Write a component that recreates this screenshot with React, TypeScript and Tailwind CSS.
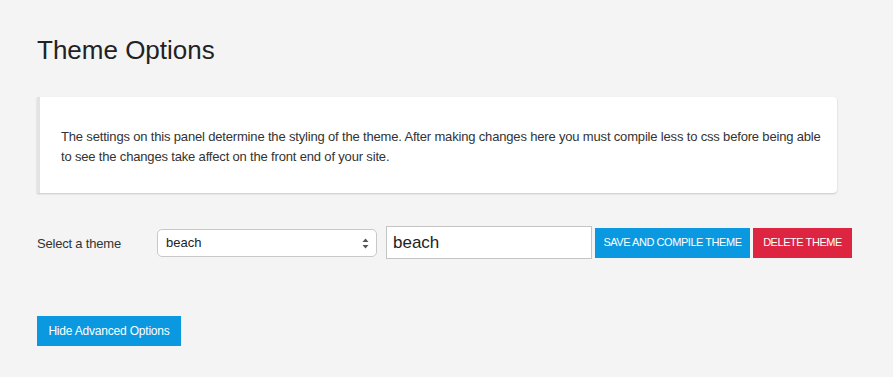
import * as React from "react";

const font = { fontFamily: '"Liberation Sans", Arial, sans-serif' };

function SelectArrows() {
  return (
    <svg width="7" height="11" viewBox="0 0 7 11" className="text-[#555]">
      <path d="M3.5 0.5 L6.5 4 L0.5 4 Z" fill="currentColor" />
      <path d="M3.5 10.5 L6.5 7 L0.5 7 Z" fill="currentColor" />
    </svg>
  );
}

export default function App() {
  const [theme, setTheme] = React.useState("beach");
  const [name, setName] = React.useState("beach");
  const [showAdvanced, setShowAdvanced] = React.useState(true);

  return (
    <div
      className="min-h-[377px] w-full bg-[#f4f4f4] pl-[37px] pr-[56px] pt-[35px] pb-8 text-[#222]"
      style={font}
    >
      <h1 className="text-[26px] leading-[30px] font-normal text-[#222]">Theme Options</h1>

      <div className="mt-[32px] flex rounded-r-[4px] bg-white shadow-[0_1px_2px_rgba(0,0,0,0.18)]">
        <div className="w-[3px] shrink-0 bg-[#e3e3e3]" />
        <p className="pl-[21px] pr-[8px] pt-[30px] pb-[26px] text-[13px] leading-[20px] tracking-[-0.17px] text-[#333] whitespace-nowrap">
          The settings on this panel determine the styling of the theme. After making changes here you must compile less
          to css before being able
          <br />
          to see the changes take affect on the front end of your site.
        </p>
      </div>

      <div className="mt-[33px] flex items-center">
        <label className="w-[120px] shrink-0 pt-[2px] text-[13px] tracking-[-0.2px] text-[#333]">Select a theme</label>
        <div className="relative h-[28px] w-[220px] shrink-0">
          <select
            value={theme}
            onChange={(e) => setTheme(e.target.value)}
            className="h-full w-full appearance-none rounded-[5px] border border-[#c8c8c8] bg-white pl-[8px] text-[13px] text-[#222] outline-none"
            style={font}
          >
            <option value="beach">beach</option>
            <option value="default">default</option>
          </select>
          <span className="pointer-events-none absolute right-[8px] top-[9px] flex">
            <SelectArrows />
          </span>
        </div>
        <input
          value={name}
          onChange={(e) => setName(e.target.value)}
          className="ml-[9px] h-[33px] w-[206px] shrink-0 border border-[#c4c4c4] bg-white px-[6px] text-[17px] text-[#222] outline-none"
          style={font}
        />
        <button className="ml-[3px] h-[30px] w-[155px] shrink-0 bg-[#0a99e0] text-[11px] uppercase text-white tracking-[-0.45px]">
          Save and compile theme
        </button>
        <button className="ml-[3px] h-[30px] w-[99px] shrink-0 bg-[#dd2440] text-[11px] uppercase text-white tracking-[-0.45px]">
          Delete theme
        </button>
      </div>

      <button
        onClick={() => setShowAdvanced(!showAdvanced)}
        className="mt-[57px] h-[30px] w-[144px] bg-[#0a99e0] text-[12px] text-white tracking-[-0.2px]"
      >
        {showAdvanced ? "Hide Advanced Options" : "Show Advanced Options"}
      </button>
    </div>
  );
}
